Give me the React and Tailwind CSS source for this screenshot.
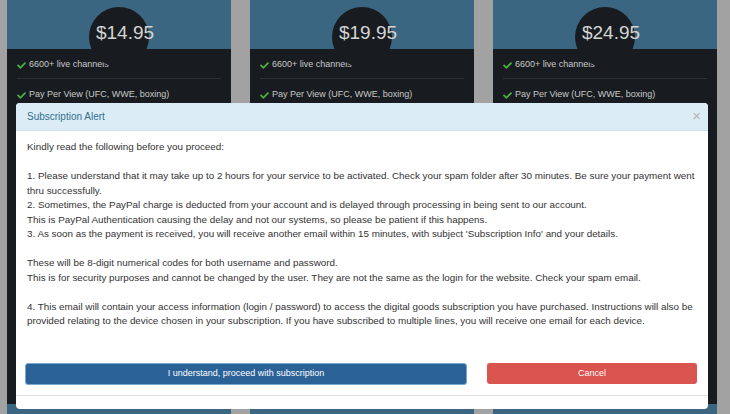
import { FaCheck } from 'react-icons/fa';

const plans = ['$14.95', '$19.95', '$24.95'];

function PlanCard({ price }) {
  return (
    <div className="w-[224px] shrink-0 flex flex-col">
      <div className="h-[49px] bg-[#3a6681] relative flex justify-center">
        <div className="absolute top-[7px] w-[60px] h-[60px] rounded-full bg-[#181c20]" />
        <span className="relative mt-[21px] pl-3 text-[19px] leading-[24px] text-[#d4d4d4]">{price}</span>
      </div>
      <div className="h-[355px] bg-[#181c20] px-[10px] pt-[9px] text-[9px] text-[#c8c8c8]">
        <div className="flex items-center gap-[3px] h-[14px]">
          <FaCheck className="text-[#4cae3c] w-[9px] h-[9px]" />
          <span className="whitespace-nowrap">6600+ live channels</span>
        </div>
        <div className="border-t border-[#2c3136] mt-[6px] mb-[9px]" />
        <div className="flex items-center gap-[3px] h-[14px]">
          <FaCheck className="text-[#4cae3c] w-[9px] h-[9px]" />
          <span className="whitespace-nowrap">Pay Per View (UFC, WWE, boxing)</span>
        </div>
      </div>
      <div className="flex-1 bg-[#3a6681]" />
    </div>
  );
}

export default function App() {
  return (
    <div className="w-[730px] h-[414px] relative overflow-hidden bg-[#a2a2a2] font-['Liberation_Sans',Arial,sans-serif]">
      <div className="flex gap-[19px] pl-[7px] h-full">
        {plans.map((p) => (
          <PlanCard key={p} price={p} />
        ))}
      </div>

      {/* modal */}
      <div className="absolute left-[16px] top-[103px] w-[692px] h-[306px] bg-white rounded-[4px] overflow-hidden flex flex-col">
        <div className="h-[28px] bg-[#dcecf6] border-b border-[#c9dfeb] flex items-center justify-between pl-[11px] pr-[7px]">
          <span className="text-[10px] text-[#31708f]">Subscription Alert</span>
          <span className="text-[15px] leading-none text-[#b5b5b5] -mt-[3px]">×</span>
        </div>
        <div className="pl-[11px] pr-[7px] pt-[9px] pb-[10px] text-[9.85px] leading-[14.5px] text-[#333]">
          <p>Kindly read the following before you proceed:</p>
          <br />
          <p>
            1. Please understand that it may take up to 2 hours for your service to be activated. Check your spam folder after 30 minutes. Be sure your payment went thru successfully.
          </p>
          <p>2. Sometimes, the PayPal charge is deducted from your account and is delayed through processing in being sent to our account.</p>
          <p>This is PayPal Authentication causing the delay and not our systems, so please be patient if this happens.</p>
          <p>3. As soon as the payment is received, you will receive another email within 15 minutes, with subject 'Subscription Info' and your details.</p>
          <br />
          <p>These will be 8-digit numerical codes for both username and password.</p>
          <p>This is for security purposes and cannot be changed by the user. They are not the same as the login for the website. Check your spam email.</p>
          <br />
          <p>
            4. This email will contain your access information (login / password) to access the digital goods subscription you have purchased. Instructions will also be provided relating to the device chosen in your subscription. If you have subscribed to multiple lines, you will receive one email for each device.
          </p>
          <div className="flex gap-[20px] mt-[34px]">
            <button className="w-[442px] h-[22px] -ml-[2px] rounded-[3px] bg-[#2a6196] border border-[#7aa6d2] text-white text-[9px]">
              I understand, proceed with subscription
            </button>
            <button className="w-[210px] h-[21px] rounded-[3px] bg-[#d9534f] text-white text-[9px]">Cancel</button>
          </div>
        </div>
        <div className="border-t border-[#e2e2e2] flex-1" />
      </div>
    </div>
  );
}
